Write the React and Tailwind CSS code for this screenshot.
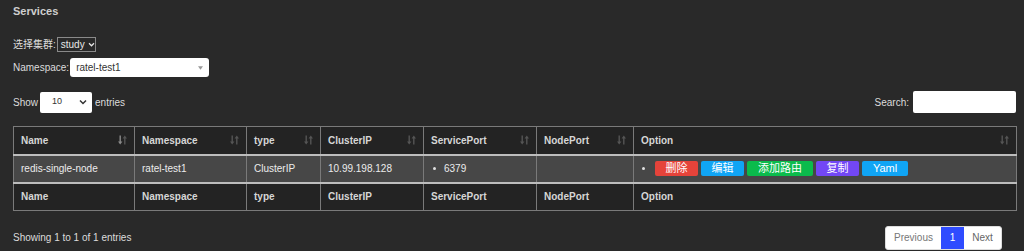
import React from "react";

function SortIcon({ active }) {
  return (
    <svg width="9" height="10" viewBox="0 0 9 10" className="shrink-0">
      <g fill={active ? "#8a8a8a" : "#555555"}>
        <rect x="1.5" y="0.5" width="1.4" height="7" />
        <polygon points="0,6.5 4.4,6.5 2.2,9.5" />
      </g>
      <g fill="#555555">
        <rect x="6.1" y="2.5" width="1.4" height="7" />
        <polygon points="4.6,3.5 9,3.5 6.8,0.5" />
      </g>
    </svg>
  );
}

const cols = [
  { name: "Name", w: "w-[121px]", active: true },
  { name: "Namespace", w: "w-[112px]" },
  { name: "type", w: "w-[74px]" },
  { name: "ClusterIP", w: "w-[103px]" },
  { name: "ServicePort", w: "w-[113px]" },
  { name: "NodePort", w: "w-[97px]" },
  { name: "Option", w: "w-[383px]" },
];

function Btn({ cls, children }) {
  return (
    <span className={`inline-flex items-center justify-center h-[15px] rounded-[2px] text-white text-[11px] leading-none ${cls}`}>
      {children}
    </span>
  );
}

export default function App() {
  return (
    <div
      className="w-[1024px] h-[251px] overflow-hidden bg-[#292929] text-[#dcdcdc] text-[10px] relative"
      style={{ fontFamily: '"Liberation Sans", Arial, "Noto Sans CJK SC", sans-serif' }}
    >
      <div className="pl-[13px] pr-[8px]">
        <div className="h-[20px] pt-[3px] font-bold text-[11px] text-[#cfcfcf]">Services</div>

        <div className="mt-[17px] flex items-center h-[14px]">
          <span>选择集群:</span>
          <div className="ml-[1px] h-[15px] w-[39px] border border-[#8a8a8a] flex items-center pl-[3px] text-[#e8e8e8] text-[10px]">
            <span>study</span>
            <svg width="7" height="5" viewBox="0 0 8 6" className="ml-[3px]">
              <path d="M1 1.5 L4 4.5 L7 1.5" stroke="#e8e8e8" strokeWidth="1.5" fill="none" />
            </svg>
          </div>
        </div>

        <div className="mt-[7px] flex items-center h-[19px]">
          <span>Namespace:</span>
          <div className="ml-[1px] h-[19px] w-[139px] bg-white rounded-[3px] flex items-center pl-[6px] pr-[6px] text-[#333]">
            <span className="flex-1">ratel-test1</span>
            <svg width="5" height="4" viewBox="0 0 6 4">
              <polygon points="0,0 6,0 3,4" fill="#999" />
            </svg>
          </div>
        </div>

        <div className="mt-[14px] flex items-center h-[22px]">
          <span>Show</span>
          <div className="ml-[2px] h-[21px] w-[52px] bg-white rounded-[2px] flex items-center pl-[12px] pr-[5px] text-[#333] text-[9px]">
            <span className="flex-1">10</span>
            <svg width="8" height="6" viewBox="0 0 8 6">
              <path d="M1 1.5 L4 4.5 L7 1.5" stroke="#333" strokeWidth="1.5" fill="none" />
            </svg>
          </div>
          <span className="ml-[3px]">entries</span>
          <div className="flex-1" />
          <span>Search:</span>
          <div className="ml-[4px] h-[22px] w-[103px] bg-white rounded-[2px]" />
        </div>

        <table className="mt-[13px] border-collapse table-fixed w-[1003px] border border-[#7a7a7a]">
          <thead>
            <tr className="h-[28px] bg-[#232323] border-b-2 border-[#bdbdbd]">
              {cols.map((c, i) => (
                <th
                  key={c.name}
                  className={`${c.w} ${i > 0 ? "border-l border-[#7a7a7a]" : ""} px-[7px] text-left font-bold text-[#d6d6d6] p-0`}
                >
                  <div className="flex items-center justify-between">
                    <span>{c.name}</span>
                    <SortIcon active={c.active} />
                  </div>
                </th>
              ))}
            </tr>
          </thead>
          <tbody>
            <tr className="h-[28px] bg-[#474747] text-[#ececec]">
              <td className="px-[7px]">redis-single-node</td>
              <td className="px-[7px] border-l border-[#7a7a7a]">ratel-test1</td>
              <td className="px-[7px] border-l border-[#7a7a7a]">ClusterIP</td>
              <td className="px-[7px] border-l border-[#7a7a7a]">10.99.198.128</td>
              <td className="px-[7px] border-l border-[#7a7a7a]">
                <div className="flex items-center">
                  <span className="w-[3px] h-[3px] rounded-full bg-[#e0e0e0] ml-[2px]" />
                  <span className="ml-[8px]">6379</span>
                </div>
              </td>
              <td className="px-[7px] border-l border-[#7a7a7a]"></td>
              <td className="px-[7px] border-l border-[#7a7a7a]">
                <div className="flex items-center">
                  <span className="w-[3px] h-[3px] rounded-full bg-[#e0e0e0] ml-[1px]" />
                  <div className="ml-[10px] flex gap-[3px]">
                    <Btn cls="w-[43px] bg-[#e5433a]">删除</Btn>
                    <Btn cls="w-[43px] bg-[#10a5f5]">编辑</Btn>
                    <Btn cls="w-[66px] bg-[#0bbb4c]">添加路由</Btn>
                    <Btn cls="w-[43px] bg-[#7247f5]">复制</Btn>
                    <Btn cls="w-[46px] bg-[#10a5f5]">Yaml</Btn>
                  </div>
                </div>
              </td>
            </tr>
          </tbody>
          <tfoot>
            <tr className="h-[28px] bg-[#232323] border-t-2 border-[#bdbdbd]">
              {cols.map((c, i) => (
                <th
                  key={c.name}
                  className={`${i > 0 ? "border-l border-[#7a7a7a]" : ""} px-[7px] text-left font-bold text-[#d6d6d6]`}
                >
                  {c.name}
                </th>
              ))}
            </tr>
          </tfoot>
        </table>

        <div className="mt-[15px] flex items-center h-[23px]">
          <span>Showing 1 to 1 of 1 entries</span>
          <div className="flex-1" />
          <div className="flex h-[24px] bg-white rounded-[3px] border border-[#ddd] overflow-hidden mr-[14px] text-[10px]">
            <span className="w-[55px] flex items-center justify-center text-[#777]">Previous</span>
            <span className="w-[23px] flex items-center justify-center bg-[#2f4cff] text-white">1</span>
            <span className="w-[37px] flex items-center justify-center text-[#666]">Next</span>
          </div>
        </div>
      </div>
    </div>
  );
}
